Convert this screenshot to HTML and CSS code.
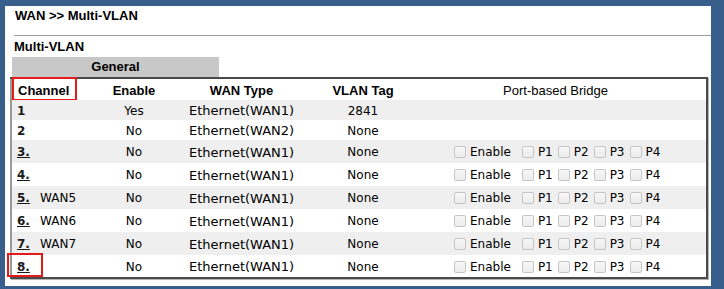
FILE: index.html
```html
<!DOCTYPE html>
<html lang="en">
<head>
  <meta charset="UTF-8" />
  <title>WAN &gt;&gt; Multi-VLAN</title>
  <link rel="stylesheet" href="styles.css">
</head>
<body>
  <div class="panel">
    <div class="title">WAN &gt;&gt; Multi-VLAN</div>
    <div class="rule"></div>
    <div class="section">Multi-VLAN</div>
    <div class="tab">General</div>

    <table class="grid">
      <colgroup>
        <col style="width:88px">
        <col style="width:70px">
        <col style="width:145px">
        <col style="width:98px">
        <col>
      </colgroup>
      <tr class="head">
        <th class="ch">Channel<span class="mark mark-head"></span></th>
        <th>Enable</th>
        <th>WAN Type</th>
        <th>VLAN Tag</th>
        <th class="bridge-head">Port-based Bridge</th>
      </tr>
      <tr class="short alt">
        <td class="ch"><span class="num">1</span></td>
        <td class="mid">Yes</td>
        <td class="wan">Ethernet(WAN1)</td>
        <td class="mid">2841</td>
        <td></td>
      </tr>
      <tr class="short">
        <td class="ch"><span class="num">2</span></td>
        <td class="mid">No</td>
        <td class="wan">Ethernet(WAN2)</td>
        <td class="mid">None</td>
        <td></td>
      </tr>
      <tr class="alt">
        <td class="ch"><a href="#" class="num">3.</a></td>
        <td class="mid">No</td>
        <td class="wan">Ethernet(WAN1)</td>
        <td class="mid">None</td>
        <td><div class="ports"><span class="cb"></span><span class="en">Enable</span><span class="cb"></span><span>P1</span><span class="cb"></span><span>P2</span><span class="cb"></span><span>P3</span><span class="cb"></span><span>P4</span></div></td>
      </tr>
      <tr>
        <td class="ch"><a href="#" class="num">4.</a></td>
        <td class="mid">No</td>
        <td class="wan">Ethernet(WAN1)</td>
        <td class="mid">None</td>
        <td><div class="ports"><span class="cb"></span><span class="en">Enable</span><span class="cb"></span><span>P1</span><span class="cb"></span><span>P2</span><span class="cb"></span><span>P3</span><span class="cb"></span><span>P4</span></div></td>
      </tr>
      <tr class="alt">
        <td class="ch"><a href="#" class="num">5.</a>WAN5</td>
        <td class="mid">No</td>
        <td class="wan">Ethernet(WAN1)</td>
        <td class="mid">None</td>
        <td><div class="ports"><span class="cb"></span><span class="en">Enable</span><span class="cb"></span><span>P1</span><span class="cb"></span><span>P2</span><span class="cb"></span><span>P3</span><span class="cb"></span><span>P4</span></div></td>
      </tr>
      <tr>
        <td class="ch"><a href="#" class="num">6.</a>WAN6</td>
        <td class="mid">No</td>
        <td class="wan">Ethernet(WAN1)</td>
        <td class="mid">None</td>
        <td><div class="ports"><span class="cb"></span><span class="en">Enable</span><span class="cb"></span><span>P1</span><span class="cb"></span><span>P2</span><span class="cb"></span><span>P3</span><span class="cb"></span><span>P4</span></div></td>
      </tr>
      <tr class="alt">
        <td class="ch"><a href="#" class="num">7.</a>WAN7</td>
        <td class="mid">No</td>
        <td class="wan">Ethernet(WAN1)</td>
        <td class="mid">None</td>
        <td><div class="ports"><span class="cb"></span><span class="en">Enable</span><span class="cb"></span><span>P1</span><span class="cb"></span><span>P2</span><span class="cb"></span><span>P3</span><span class="cb"></span><span>P4</span></div></td>
      </tr>
      <tr>
        <td class="ch"><a href="#" class="num">8.</a><span class="mark mark-row"></span></td>
        <td class="mid">No</td>
        <td class="wan">Ethernet(WAN1)</td>
        <td class="mid">None</td>
        <td><div class="ports"><span class="cb"></span><span class="en">Enable</span><span class="cb"></span><span>P1</span><span class="cb"></span><span>P2</span><span class="cb"></span><span>P3</span><span class="cb"></span><span>P4</span></div></td>
      </tr>
    </table>
  </div>
</body>
</html>
```

FILE: styles.css
```css
* { box-sizing: border-box; }
body {
  margin: 0;
  background: #385f8c;
  font-family: "Liberation Sans", Arial, sans-serif;
  color: #000;
}
.panel {
  background: #fff;
  margin: 6px 13px 0 5px;
  height: 280px;
  padding-top: 2px;
}
.title {
  font-size: 13px;
  font-weight: bold;
  line-height: 15px;
  padding-left: 10px;
}
.rule {
  height: 1px;
  background: #9c9c9c;
  margin: 12px 0 0 9px;
}
.section {
  font-size: 13px;
  font-weight: bold;
  line-height: 15px;
  margin-top: 3px;
  padding-left: 9px;
}
.tab {
  width: 207px;
  height: 20px;
  margin: 3px 0 0 7px;
  background: #c8c8c8;
  font-size: 13px;
  font-weight: bold;
  line-height: 20px;
  text-align: center;
}
.grid {
  width: 698px;
  margin-left: 5px;
  border-collapse: collapse;
  border-style: solid;
  border-width: 2px;
  border-color: #4a4a4a #4a4a4a #4a4a4a #9a9a9a;
  box-shadow: 1px 1px 0 #b4b4b4;
  table-layout: fixed;
}
.grid th, .grid td {
  padding: 0;
}
.grid th {
  font-size: 13px;
  font-weight: bold;
  height: 22px;
  padding-top: 2px;
  text-align: center;
}
.grid th.ch {
  text-align: left;
  padding-left: 6px;
  position: relative;
}
.grid th.bridge-head {
  font-weight: normal;
  padding-right: 7px;
}
.grid td {
  font-family: "DejaVu Sans", Verdana, sans-serif;
  font-size: 12px;
  height: 23px;
  padding-top: 1px;
}
.grid tr.short td { height: 20px; }
.grid tr.alt td { background: #efefef; }
.grid td.ch {
  padding-left: 5px;
  position: relative;
}
.grid td.mid { text-align: center; }
.grid td.wan {
  font-size: 13px;
  padding-left: 20px;
}
.num {
  display: inline-block;
  width: 23px;
  font-weight: bold;
  color: #1a1a1a;
}
a.num { text-decoration: underline; }
.ports {
  display: flex;
  align-items: center;
  padding-left: 42px;
}
.cb {
  width: 12px;
  height: 12px;
  border: 1px solid #c6c6c6;
  border-radius: 2px;
  background: linear-gradient(#f7f7f7, #ececec);
  margin: 0 4px 0 5px;
}
.cb:first-child { margin-left: 0; }
.en { margin-right: 6px; }
.mark {
  position: absolute;
  border: 2px solid #e31b1b;
}
.mark-head {
  left: 0;
  top: -2px;
  width: 65px;
  height: 24px;
}
.mark-row {
  left: -5px;
  top: -2px;
  width: 36px;
  height: 24px;
}
```
